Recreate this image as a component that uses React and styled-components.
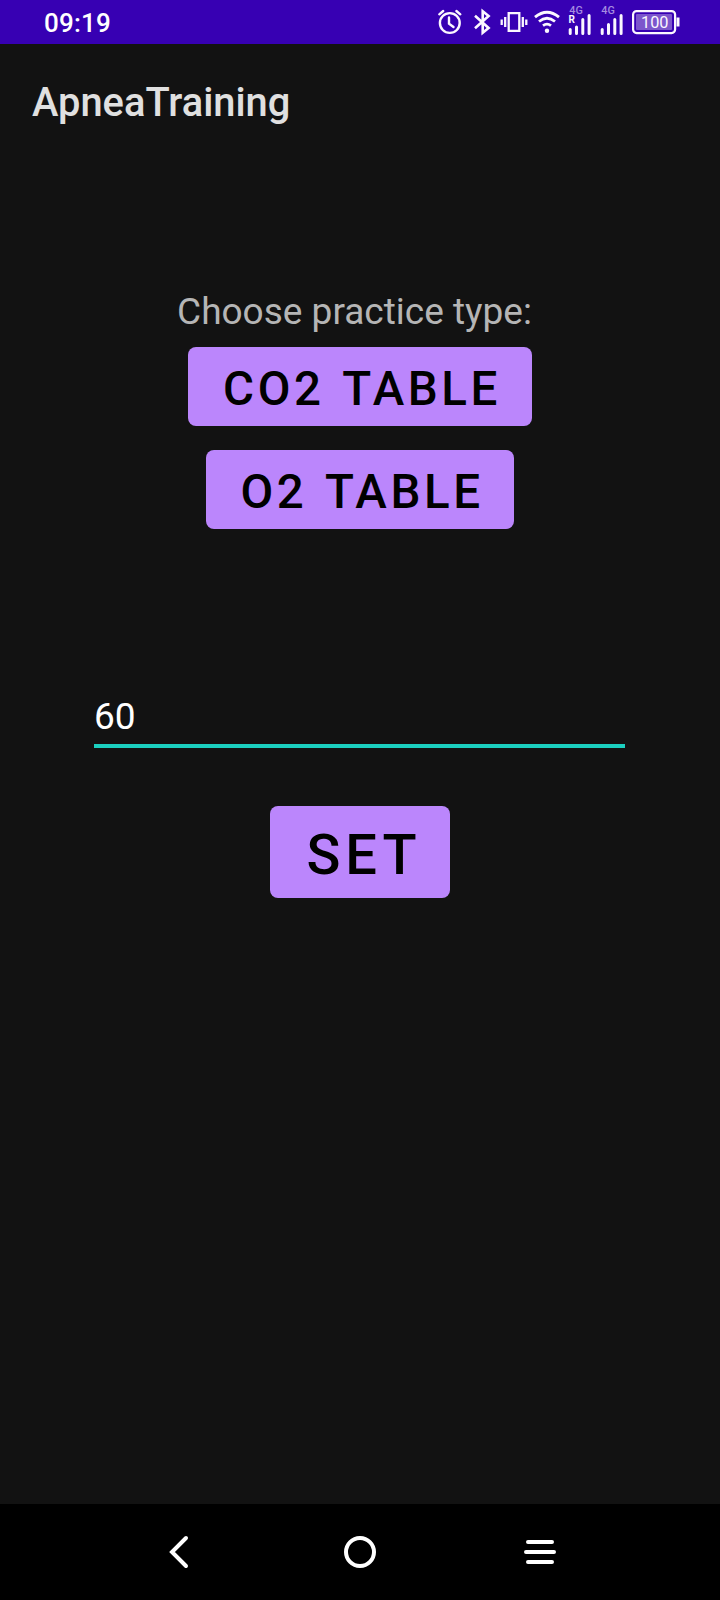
import React from "react";
import styled, { createGlobalStyle } from "styled-components";

const GlobalStyle = createGlobalStyle`
  * { box-sizing: border-box; }
  body { margin: 0; background: #121212; font-family: Roboto, "Liberation Sans", sans-serif; }
`;

const Screen = styled.div`
  display: flex;
  flex-direction: column;
  width: 720px;
  height: 1600px;
  background: #121212;
  overflow: hidden;
`;

const StatusBar = styled.header`
  display: flex;
  align-items: center;
  justify-content: space-between;
  height: 44px;
  padding: 0 40px 0 44px;
  background: #3700b3;
`;

const Clock = styled.time`
  font-size: 26px;
  font-weight: 500;
  line-height: 44px;
  padding-top: 1px;
  letter-spacing: 0.2px;
  color: #fff;
`;

const StatusIcon = styled.svg`
  display: block;
  flex: none;
  width: ${(p) => p.$w}px;
  height: 44px;
  fill: none;
  stroke: #fbf7ff;
`;

const StatusIcons = styled.div`
  display: flex;
`;

const NetworkLabel = styled.text`
  font-size: ${(p) => p.$size}px;
  font-weight: ${(p) => p.$weight || 400};
  fill: ${(p) => p.$color};
  stroke: none;
`;

const AppBar = styled.div`
  display: flex;
  align-items: center;
  height: 112px;
  padding: 6px 32px 0;
`;

const Title = styled.h1`
  margin: 0;
  font-size: 39.85px;
  font-weight: 500;
  line-height: 48px;
  color: #e0e0e0;
`;

const Content = styled.main`
  flex: 1;
  display: flex;
  flex-direction: column;
  align-items: center;
`;

const PracticeGroup = styled.section`
  display: flex;
  flex-direction: column;
  align-items: center;
  padding-top: 132px;
`;

const Prompt = styled.p`
  margin: 0 11px 11px 0;
  font-size: 37px;
  line-height: 48px;
  color: #b5b5b5;
  white-space: nowrap;
`;

const PurpleButton = styled.button`
  display: block;
  width: ${(p) => p.$width}px;
  height: ${(p) => p.$height}px;
  margin: 0 0 ${(p) => p.$gap || 0}px;
  padding: 5px 0 0 ${(p) => p.$left || 4}px;
  border: 0;
  border-radius: 8px;
  background: #bb86fc;
  color: #000;
  font-family: inherit;
  font-size: ${(p) => p.$size}px;
  font-weight: 500;
  letter-spacing: ${(p) => p.$tracking || "0.075em"};
  word-spacing: 3.5px;
  white-space: nowrap;
`;

const SecondsInput = styled.input`
  width: 531px;
  height: 64px;
  margin: 155px 1px 58px 0;
  padding: 4px 0 0;
  border: 0;
  border-bottom: 4px solid #1bcfbf;
  border-radius: 0;
  outline: none;
  background: transparent;
  color: #fff;
  font-family: inherit;
  font-size: 37px;
`;

const NavBar = styled.nav`
  display: flex;
  justify-content: center;
  gap: 132px;
  height: 96px;
  background: #000;
`;

const NavButton = styled.button`
  width: 48px;
  height: 96px;
  padding: 0;
  border: 0;
  background: none;
`;

const NavIcon = styled.svg`
  display: block;
  width: 48px;
  height: 96px;
  fill: none;
  stroke: #fff;
  stroke-width: 4;
  stroke-linecap: round;
`;

function Signal({ roaming }) {
  return (
    <StatusIcon $w={32} viewBox="0 0 32 44" strokeWidth="3" strokeLinecap="round">
      <NetworkLabel x="1.3" y="13.6" $size={10.8} $weight={500} $color="#a58be0">4G</NetworkLabel>
      {roaming && (
        <NetworkLabel x="0.6" y="22.8" $size={10} $weight={700} $color="#fbf7ff">R</NetworkLabel>
      )}
      <path d={`M2.2 29.5V33.5M8.5 ${roaming ? 27 : 24.5}V33.5M14.8 19.5V33.5M21.1 15.5V33.5`} />
    </StatusIcon>
  );
}

export default function App() {
  return (
    <>
      <GlobalStyle />
      <Screen>
        <StatusBar>
          <Clock>09:19</Clock>
          <StatusIcons>
            <StatusIcon $w={34} viewBox="436 0 34 44" strokeWidth="2.4" strokeLinecap="round">
              <circle cx="449.8" cy="23" r="9.9" />
              <path d="M449 17.5V23.6L453.5 27M439.3 14.3L443.2 11M460.3 14.3L456.4 11" />
            </StatusIcon>
            <StatusIcon $w={28} viewBox="470 0 28 44" strokeWidth="2.6">
              <path d="M475 15.8L488.6 28L482.7 32.7V11.2L488.6 16L475 28.2" />
            </StatusIcon>
            <StatusIcon $w={34} viewBox="498 0 34 44" strokeWidth="2.3">
              <path d="M508.7 13.2H519.3V30.8H508.7ZM505.2 17V27M501.7 19.5V25M522.8 17V27M526.3 19.5V25" />
            </StatusIcon>
            <StatusIcon $w={36} viewBox="532 0 36 44" strokeWidth="2.8">
              <path d="M535 17.2Q547 7.2 559 17.2M539 21.5Q547 15 555 21.5M543 25.7Q547 22.6 551 25.7" />
              <circle cx="547" cy="30.7" r="2.2" fill="#fbf7ff" stroke="none" />
            </StatusIcon>
            <Signal roaming />
            <Signal />
            <StatusIcon $w={48} viewBox="632 0 48 44" strokeWidth="2.2">
              <rect x="633.1" y="11.1" width="42" height="22" rx="3.5" />
              <rect x="636" y="14" width="36" height="16" rx="1" fill="#7c56cc" stroke="none" />
              <path d="M678 17.5V26.5" strokeWidth="3" />
              <NetworkLabel x="641" y="28.3" $size={16.3} $color="#fbf7ff">100</NetworkLabel>
            </StatusIcon>
          </StatusIcons>
        </StatusBar>
        <AppBar>
          <Title>ApneaTraining</Title>
        </AppBar>
        <Content>
          <PracticeGroup>
            <Prompt>Choose practice type:</Prompt>
            <PurpleButton $width={344} $height={79} $size={47.5} $gap={24}>CO2 TABLE</PurpleButton>
            <PurpleButton $width={308} $height={79} $size={47.5}>O2 TABLE</PurpleButton>
          </PracticeGroup>
          <SecondsInput defaultValue="60" inputMode="numeric" aria-label="Seconds" />
          <PurpleButton $width={180} $height={92} $size={56} $left={8} $tracking="0.0893em">
            SET
          </PurpleButton>
        </Content>
        <NavBar>
          <NavButton aria-label="Back">
            <NavIcon viewBox="156 0 48 96"><path d="M186 34L172 48L186 62" /></NavIcon>
          </NavButton>
          <NavButton aria-label="Home">
            <NavIcon viewBox="336 0 48 96"><circle cx="360" cy="48" r="14" /></NavIcon>
          </NavButton>
          <NavButton aria-label="Menu">
            <NavIcon viewBox="516 0 48 96"><path d="M528 38H552M526 48H554M528 58H552" /></NavIcon>
          </NavButton>
        </NavBar>
      </Screen>
    </>
  );
}
